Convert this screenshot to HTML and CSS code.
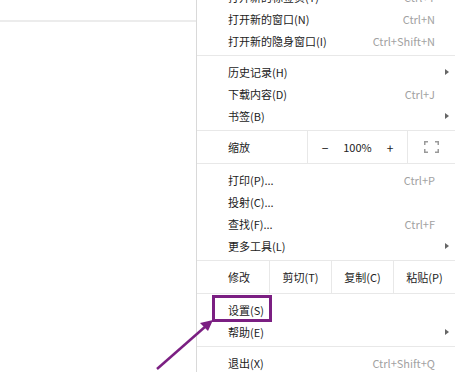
FILE: index.html
```html
<!DOCTYPE html>
<html lang="zh-CN">
<head>
    <meta charset="UTF-8">
    <title>菜单</title>
    <link rel="stylesheet" href="styles.css">
</head>
<body>
    <div class="page">
        <div class="side">
            <div class="toolbar"></div>
        </div>

        <div class="menu">
            <div class="item"><span>打开新的标签页(T)</span><span class="key">Ctrl+T</span></div>
            <div class="item"><span>打开新的窗口(N)</span><span class="key">Ctrl+N</span></div>
            <div class="item"><span>打开新的隐身窗口(I)</span><span class="key">Ctrl+Shift+N</span></div>
            <div class="sep"></div>
            <div class="item"><span>历史记录(H)</span><span class="arrow"></span></div>
            <div class="item"><span>下载内容(D)</span><span class="key">Ctrl+J</span></div>
            <div class="item"><span>书签(B)</span><span class="arrow"></span></div>

            <div class="row zoom">
                <span class="label">缩放</span>
                <div class="zoom-ctrl">
                    <span class="btn">−</span>
                    <span class="pct">100%</span>
                    <span class="btn">+</span>
                </div>
                <div class="full">
                    <svg width="15" height="12" viewBox="0 0 15 12">
                        <path d="M0.75 4V0.75H4 M11 0.75H14.25V4 M14.25 8V11.25H11 M4 11.25H0.75V8" fill="none" stroke="#9a9a9a" stroke-width="1.5"/>
                    </svg>
                </div>
            </div>

            <div class="item"><span>打印(P)...</span><span class="key">Ctrl+P</span></div>
            <div class="item"><span>投射(C)...</span></div>
            <div class="item"><span>查找(F)...</span><span class="key">Ctrl+F</span></div>
            <div class="item"><span>更多工具(L)</span><span class="arrow"></span></div>

            <div class="row edit">
                <span class="label">修改</span>
                <span class="cell">剪切(T)</span>
                <span class="cell">复制(C)</span>
                <span class="cell">粘贴(P)</span>
            </div>

            <div class="item"><span class="mark">设置(S)</span></div>
            <div class="item"><span>帮助(E)</span><span class="arrow"></span></div>
            <div class="sep"></div>
            <div class="item"><span>退出(X)</span><span class="key">Ctrl+Shift+Q</span></div>
        </div>

        <!-- annotation arrow -->
        <svg class="callout" width="455" height="372" viewBox="0 0 455 372">
            <line x1="157" y1="369" x2="206" y2="326" stroke="#7b1f82" stroke-width="2.5"/>
            <polygon points="213,320 200,323 208,331" fill="#7b1f82"/>
        </svg>
    </div>
</body>
</html>
```

FILE: styles.css
```css
body {
    margin: 0;
    background-color: #fff;
    font-family: "Noto Sans CJK SC", sans-serif;
    font-size: 11px;
    color: #222;
}

.page {
    position: relative;
    width: 455px;
    height: 372px;
    overflow: hidden;
    display: flex;
}

.side {
    width: 196px;
    flex-shrink: 0;
}

.toolbar {
    height: 20px;
    border-bottom: 2px solid #ececec;
}

.menu {
    width: 258px;
    flex-shrink: 0;
    margin-top: -14px;
    border-left: 1px solid #d9d9d9;
    background-color: #fff;
}

.item {
    display: flex;
    justify-content: space-between;
    align-items: center;
    height: 22px;
    line-height: 22px;
    padding: 0 20px 0 31px;
}

.key {
    color: #a2a2a2;
}

.arrow {
    width: 0;
    height: 0;
    margin-right: -14px;
    border-top: 3px solid transparent;
    border-bottom: 3px solid transparent;
    border-left: 4px solid #666;
}

.sep {
    height: 1px;
    margin: 3px 0 5px;
    background-color: #e8e8e8;
}

.row {
    display: flex;
    height: 32px;
    margin: 3px 0 5px;
    border-top: 1px solid #e8e8e8;
    border-bottom: 1px solid #e8e8e8;
}

.row .label {
    display: flex;
    align-items: center;
    padding-left: 31px;
}

.zoom .label {
    width: 79px;
}

.zoom-ctrl {
    display: flex;
    align-items: center;
    width: 99px;
    border-left: 1px solid #e8e8e8;
}

.zoom-ctrl .btn {
    width: 34px;
    text-align: center;
    font-size: 12px;
}

.zoom-ctrl .pct {
    width: 31px;
    text-align: center;
}

.full {
    display: flex;
    align-items: center;
    padding-left: 16px;
    border-left: 1px solid #e8e8e8;
    flex: 1;
}

.edit .label {
    width: 43px;
}

.edit .cell {
    display: flex;
    align-items: center;
    justify-content: center;
    width: 61px;
    flex-shrink: 0;
    border-left: 1px solid #e8e8e8;
}

.mark {
    position: relative;
}

.mark::after {
    content: "";
    position: absolute;
    left: -16px;
    top: -4px;
    width: 54px;
    height: 21px;
    border: 3px solid #7b1f82;
}

.callout {
    position: absolute;
    left: 0;
    top: 0;
    pointer-events: none;
}
```
